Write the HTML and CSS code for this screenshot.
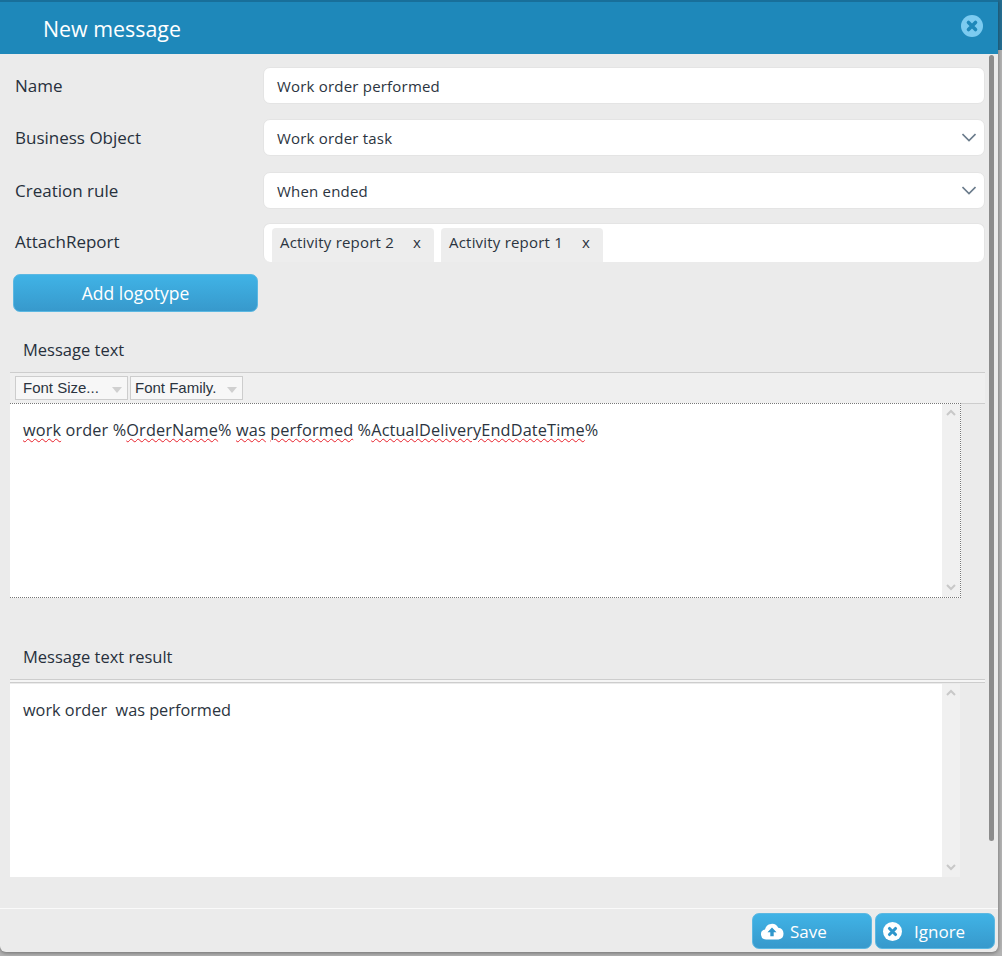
FILE: index.html
```html
<!DOCTYPE html>
<html lang="en">
<head>
  <meta charset="UTF-8" />
  <title>New message</title>
  <link rel="stylesheet" href="styles.css">
</head>
<body>

  <div class="modal">
    <header class="modal-header">
      <h1>New message</h1>
      <svg class="close-icon" width="22" height="22" viewBox="0 0 22 22">
        <circle cx="11" cy="11" r="11" fill="#7ccbf0"/>
        <path d="M7.5 7.5l7 7M14.5 7.5l-7 7" stroke="#1e88ba" stroke-width="3.6" stroke-linecap="round"/>
      </svg>
    </header>

    <div class="modal-body">
      <div class="scroll-thumb"></div>

      <div class="form-row row-name">
        <label>Name</label>
        <div class="field">Work order performed</div>
      </div>
      <div class="form-row row-object">
        <label>Business Object</label>
        <div class="field">Work order task
          <svg class="chevron" width="14" height="9" viewBox="0 0 14 9"><path d="M0.500 1L7 7.500 13.500 1" fill="none" stroke="#6b7c8c" stroke-width="1.600"/></svg>
        </div>
      </div>
      <div class="form-row row-rule">
        <label>Creation rule</label>
        <div class="field">When ended
          <svg class="chevron" width="14" height="9" viewBox="0 0 14 9"><path d="M0.500 1L7 7.500 13.500 1" fill="none" stroke="#6b7c8c" stroke-width="1.600"/></svg>
        </div>
      </div>
      <div class="form-row row-report">
        <label>AttachReport</label>
        <div class="field tags">
          <span class="tag">Activity report 2 <b>x</b></span>
          <span class="tag">Activity report 1 <b>x</b></span>
        </div>
      </div>

      <button class="blue-button logo-button">Add logotype</button>

      <!-- Message text -->
      <h2 class="section-title">Message text</h2>
      <div class="toolbar">
        <span class="tool-select size-select">Font Size...<i></i></span>
        <span class="tool-select family-select">Font Family.<i></i></span>
      </div>
      <div class="editor editor-dotted">
        <div class="editor-text">
          <span class="typo">work</span> order %<span class="typo">OrderName</span>% <span class="typo">was</span> <span class="typo">performed</span> %<span class="typo">ActualDeliveryEndDateTime</span>%
        </div>
        <div class="editor-scroll">
          <svg width="10" height="7" viewBox="0 0 10 7"><path d="M1 6l4-4 4 4" fill="none" stroke="#c8c8c8" stroke-width="2"/></svg>
          <svg width="10" height="7" viewBox="0 0 10 7"><path d="M1 1l4 4 4-4" fill="none" stroke="#c8c8c8" stroke-width="2"/></svg>
        </div>
      </div>

      <!-- Message text result -->
      <h2 class="section-title result-title">Message text result</h2>
      <div class="double-line"></div>
      <div class="editor editor-result">
        <div class="editor-text">work order &nbsp;was performed</div>
        <div class="editor-scroll">
          <svg width="10" height="7" viewBox="0 0 10 7"><path d="M1 6l4-4 4 4" fill="none" stroke="#c8c8c8" stroke-width="2"/></svg>
          <svg width="10" height="7" viewBox="0 0 10 7"><path d="M1 1l4 4 4-4" fill="none" stroke="#c8c8c8" stroke-width="2"/></svg>
        </div>
      </div>
    </div>

    <footer class="modal-footer">
      <button class="blue-button foot-button">
        <svg width="24" height="18" viewBox="0 0 24 18">
          <path d="M6 17.500a5 5 0 0 1-1-9.900 7 7 0 0 1 13.200-1.800A5.900 5.900 0 0 1 18.500 17.500z" fill="#fff"/>
          <path d="M12 5.500l-4.500 4.800h2.800v4h3.400v-4h2.800z" fill="#2f97cc"/>
        </svg>
        Save
      </button>
      <button class="blue-button foot-button ignore-button">
        <svg width="19" height="19" viewBox="0 0 22 22">
          <circle cx="11" cy="11" r="11" fill="#fff"/>
          <path d="M7.500 7.500l7 7M14.500 7.500l-7 7" stroke="#2f97cc" stroke-width="3.600" stroke-linecap="round"/>
        </svg>
        Ignore
      </button>
    </footer>
  </div>

</body>
</html>
```

FILE: styles.css
```css
* {
  margin: 0;
  padding: 0;
  box-sizing: border-box;
}

body {
  width: 1002px;
  height: 956px;
  overflow: hidden;
  font-family: 'Open Sans', sans-serif;
  background: linear-gradient(#256f93 50px, #b4b4b4 50px);
  color: #2b3440;
}

.modal {
  width: 998px;
  height: 952px;
  display: flex;
  flex-direction: column;
  background-color: #ebebeb;
  border-radius: 0 0 6px 6px;
  box-shadow: 0 1px 4px rgba(0,0,0,0.4);
}

.modal-header {
  height: 54px;
  flex: none;
  display: flex;
  align-items: center;
  justify-content: space-between;
  padding: 0 15px 0 43px;
  background-color: #1e88ba;
  border-top: 2px solid #186f9a;
  color: white;
}

.modal-header h1 {
  font-size: 21.400px;
  font-weight: 400;
}

.close-icon {
  margin-top: -4px;
}

.modal-body {
  position: relative;
  flex: 1;
  padding-top: 13px;
}

.scroll-thumb {
  position: absolute;
  top: 1px;
  right: 4px;
  width: 5px;
  height: 786px;
  background-color: #8c8c8c;
  border-radius: 3px;
}

.form-row {
  display: flex;
  align-items: center;
  padding: 0 13px 0 15px;
}

.form-row label {
  width: 248px;
  font-size: 17px;
  color: #27303c;
}

.field {
  flex: 1;
  position: relative;
  height: 37px;
  display: flex;
  align-items: center;
  padding: 1px 13px 0;
  font-size: 15px;
  letter-spacing: 0.2px;
  background-color: white;
  border: 1px solid #e4e4e4;
  border-radius: 7px;
}

.chevron {
  position: absolute;
  right: 8px;
  top: 13px;
}

.row-object {
  margin-top: 15px;
}

.row-rule {
  margin-top: 16px;
}

.row-report {
  margin-top: 14px;
}

.row-report label {
  padding-bottom: 2px;
}

.tags {
  height: 39px;
  align-items: flex-end;
  gap: 7px;
  padding: 4px 8px 0;
  border-bottom: none;
}

.tag {
  height: 34px;
  display: flex;
  align-items: center;
  padding: 0 13px 6px 8px;
  background-color: #ededed;
  border-radius: 4px 4px 0 0;
}

.tag b {
  margin-left: 19px;
  font-weight: 400;
}

.blue-button {
  font-family: 'Open Sans', sans-serif;
  color: white;
  background: linear-gradient(#40b3e6, #3799cc);
  border: 1px solid #5cb8e2;
  border-radius: 7px;
  cursor: pointer;
}

.logo-button {
  display: block;
  width: 245px;
  height: 38px;
  margin: 12px 0 0 13px;
  font-size: 17.500px;
}

.section-title {
  height: 22px;
  margin: 27px 0 0 23px;
  font-size: 16.500px;
  font-weight: 400;
  line-height: 22px;
  color: #27303c;
}

.toolbar {
  display: flex;
  gap: 2px;
  width: 975px;
  height: 32px;
  margin: 11px 0 0 10px;
  padding: 3px 0 0 5px;
  background-color: #efefef;
  border-top: 1px solid #cdcdcd;
  border-bottom: 1px solid #cdcdcd;
}

.tool-select {
  position: relative;
  height: 24px;
  padding-left: 7px;
  font-family: 'Liberation Sans', sans-serif;
  font-size: 15px;
  line-height: 21px;
  background-color: #f7f7f7;
  border: 1px solid #cdcdcd;
}

.tool-select i {
  position: absolute;
  right: 5px;
  top: 10px;
  border: 5px solid transparent;
  border-top: 6px solid #d0d0d0;
  border-bottom: none;
}

.size-select {
  width: 113px;
}

.family-select {
  width: 113px;
  padding-left: 4px;
}

.editor {
  display: flex;
  width: 950px;
  height: 195px;
  margin-left: 10px;
  background-color: white;
}

.editor-dotted {
  border-right: 1px dotted #777;
  border-bottom: 1px dotted #777;
  margin-top: -1px;
  border-top: 1px dotted #777;
  width: 951px;
}

.editor-dotted .editor-text {
  padding-top: 15px;
  letter-spacing: 0.13px;
}

.editor-result {
  height: 193px;
  margin-top: 1px;
}

.editor-text {
  flex: 1;
  padding: 15px 13px;
  font-size: 16.300px;
  line-height: 22px;
}

.typo {
  text-decoration: underline wavy #e8202a 1.300px;
  text-underline-offset: 2px;
}

.editor-scroll {
  width: 18px;
  flex: none;
  display: flex;
  flex-direction: column;
  justify-content: space-between;
  align-items: center;
  padding: 5px 0 6px;
  background-color: #f0f0f0;
}

.result-title {
  margin-top: 48px;
}

.double-line {
  height: 4px;
  width: 975px;
  margin: 11px 0 0 10px;
  border-top: 1px solid #cdcdcd;
  border-bottom: 1px solid #cdcdcd;
  background-color: #f5f5f5;
}

.modal-footer {
  height: 44px;
  flex: none;
  display: flex;
  justify-content: flex-end;
  gap: 3px;
  padding: 4px 3px 0 0;
  border-top: 1px solid #fafafa;
}

.foot-button {
  width: 120px;
  height: 36px;
  display: flex;
  align-items: center;
  gap: 6px;
  padding-left: 7px;
  font-size: 17px;
}

.ignore-button {
  gap: 12px;
}
```
